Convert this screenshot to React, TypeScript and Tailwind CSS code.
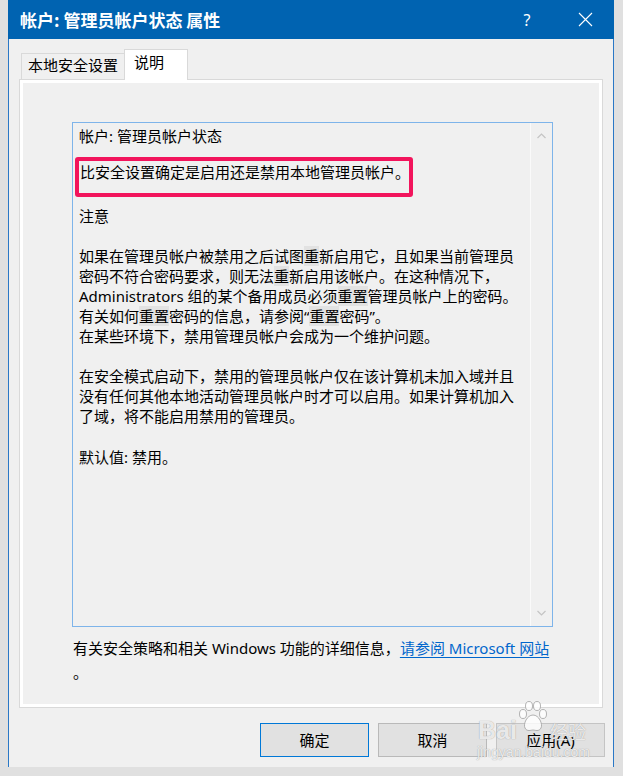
import React from "react";

function H({ children }: { children: React.ReactNode }) {
  return <span className="bg-[#e2e2e2]">{children}</span>;
}

function Chevron({ up }: { up?: boolean }) {
  return (
    <svg width="9" height="6" viewBox="0 0 9 6" fill="none">
      {up ? (
        <path d="M0.5 5 L4.5 1 L8.5 5" stroke="#c4c4c4" strokeWidth="1.2" />
      ) : (
        <path d="M0.5 1 L4.5 5 L8.5 1" stroke="#c4c4c4" strokeWidth="1.2" />
      )}
    </svg>
  );
}

export default function App() {
  return (
    <div className="w-[623px] h-[776px] bg-[#e0e0e0] overflow-hidden font-['Noto_Sans','Noto_Sans_CJK_SC',sans-serif] text-black">
      <div className="relative ml-[8px] w-[606px] h-[767px] flex flex-col">
        {/* Title bar */}
        <div className="h-[39px] shrink-0 bg-[#0063b1] flex items-center text-white">
          <div className="pl-[12px] text-[17px] leading-none font-bold font-['Noto_Sans_CJK_SC',sans-serif]">
            帐户: 管理员帐户状态 属性
          </div>
          <div className="ml-auto flex h-full">
            <div className="w-[58px] flex items-center justify-center text-[16px] font-['Noto_Sans',sans-serif]">?</div>
            <div className="w-[58px] flex items-center justify-center">
              <svg width="15" height="15" viewBox="0 0 15 15">
                <path d="M1 1 L14 14 M14 1 L1 14" stroke="#ffffff" strokeWidth="1.1" />
              </svg>
            </div>
          </div>
        </div>

        {/* Body */}
        <div className="flex-1 bg-[#f0f0f0] border-l border-r border-[#2a78c6] px-[10px] pt-[10px] flex flex-col">
          {/* Tabs */}
          <div className="h-[30px] flex items-end pl-[2px]">
            <div className="w-[103px] h-[26px] border border-b-0 border-r-0 border-[#d9d9d9] bg-[#f0f0f0] pl-[6px] text-[15px] leading-[22px] whitespace-nowrap">
              本地安全设置
            </div>
            <div className="relative z-10 -mb-px w-[64px] h-[31px] border border-b-0 border-[#d9d9d9] bg-white pl-[9px] text-[15px] leading-[24px]">
              说明
            </div>
          </div>

          {/* Panel */}
          <div className="h-[629px] border border-[#d9d9d9] bg-white p-[3px]">
            <div className="h-full bg-[#f0f0f0] flex flex-col">
              <div className="ml-[49px] mt-[39px] w-[481px] h-[505px] border border-[#7eb4ea] flex">
                <div className="flex-1 pl-[6px] pt-[3px] text-[15px] leading-[20px] whitespace-nowrap">
                  <div>帐户: 管理员帐户状态</div>
                  <div className="relative mt-[16px] ml-[1px]">
                    比安全设置确定是启用还是禁用本地管理员帐户。
                    <span className="absolute left-[-5px] top-[-5px] w-[338px] h-[40px] border-4 border-[#f2145c] rounded-[3px]"></span>
                  </div>
                  <div className="mt-[24px]">注意</div>
                  <div className="mt-[20px]">
                    <div>如果在管理员帐户被禁用之后试图<H>重</H>新启用它，且如果当前管理员</div>
                    <div>密码不符合密码要求，则无法<H>重</H>新启用该帐户。在这种情况下，</div>
                    <div>Administrators 组的某个备用成员必须<H>重置</H>管理员帐户上的密码。</div>
                    <div>有关如何<H>重置</H>密码的信息，请参阅“<H>重置</H>密码”。</div>
                    <div>在某些环境下，禁用管理员帐户会成为一个维护问题。</div>
                  </div>
                  <div className="mt-[20px]">
                    <div>在安全模式启动下，禁用的管理员帐户仅在该计算机未加入域并且</div>
                    <div>没有任何其他本地活动管理员帐户时才可以启用。如果计算机加入</div>
                    <div>了域，将不能启用禁用的管理员。</div>
                  </div>
                  <div className="mt-[21px]">默认值: 禁用。</div>
                </div>
                <div className="w-[22px] border-l border-[#fafafa] flex flex-col justify-between items-center pt-[10px] pb-[10px]">
                  <Chevron up />
                  <Chevron />
                </div>
              </div>
              <div className="mt-[9px] ml-[50px] text-[15px] leading-[24px] whitespace-nowrap">
                <div>
                  有关安全策略和相关 Windows 功能的详细信息，
                  <span className="text-[#0066cc] underline underline-offset-[3px]">请参阅 Microsoft 网站</span>
                </div>
                <div>。</div>
              </div>
            </div>
          </div>

          {/* Buttons */}
          <div className="mt-[15px] -mr-[2px] flex justify-end gap-[9px]">
            <button className="w-[109px] h-[34px] border border-[#0078d7] bg-[#e1e1e1] text-[15px] leading-none">确定</button>
            <button className="w-[109px] h-[34px] border border-[#b9b9b9] bg-[#e1e1e1] text-[15px] leading-none">取消</button>
            <button className="w-[109px] h-[34px] border border-[#c4c4c4] bg-[#e1e1e1] text-[15px] leading-none">应用(A)</button>
          </div>
        </div>

        {/* Watermark */}
        <div className="absolute left-[470px] top-[718px] text-[25px] font-bold leading-none text-white/80 [text-shadow:0_0_1px_#8a8a8a] font-['Liberation_Sans',sans-serif]">
          Bai
        </div>
        <svg className="absolute left-[509px] top-[700px]" width="32" height="34" viewBox="0 0 32 34">
          <g fill="rgba(255,255,255,0.8)" stroke="#a0a0a0" strokeWidth="0.8">
            <ellipse cx="6" cy="14" rx="3.5" ry="4.5" />
            <ellipse cx="12" cy="6" rx="3.5" ry="4.5" />
            <ellipse cx="20" cy="6" rx="3.5" ry="4.5" />
            <ellipse cx="26" cy="14" rx="3.5" ry="4.5" />
            <path d="M16 15 C10 15 6 24 8 28 C10 32 14 30 16 30 C18 30 22 32 24 28 C26 24 22 15 16 15 Z" />
          </g>
        </svg>
        <div className="absolute left-[542px] top-[722px] text-[18px] leading-none text-white/80 [text-shadow:0_0_1px_#8a8a8a] font-['Noto_Sans_CJK_SC',sans-serif]">
          经验
        </div>
        <div className="absolute left-[469px] top-[745px] text-[14px] leading-none text-white/80 [text-shadow:0_0_1px_#8a8a8a] font-['Liberation_Sans',sans-serif]">
          jingyan.baidu.com
        </div>
      </div>
    </div>
  );
}
